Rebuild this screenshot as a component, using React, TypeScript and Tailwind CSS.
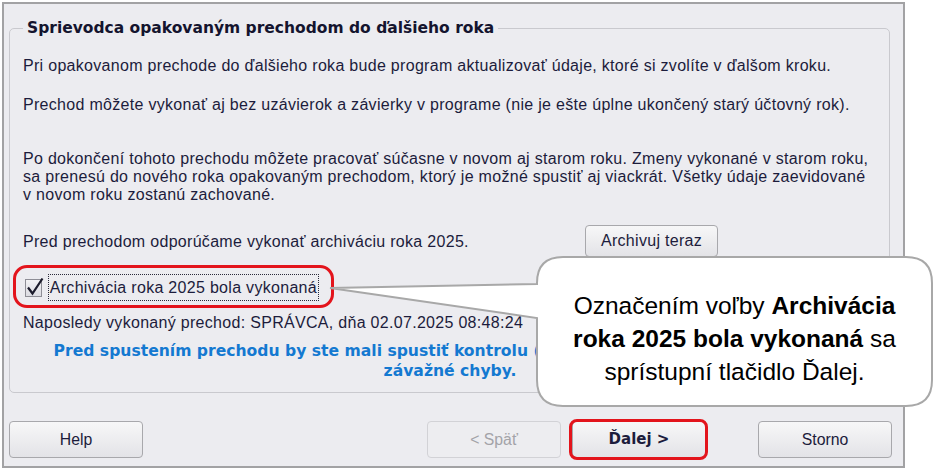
import React from "react";

const body = { fontFamily: '"Liberation Sans", Arial, sans-serif' };
const bold = { fontFamily: '"DejaVu Sans", Verdana, sans-serif' };

function WinButton({ children, disabled, strong }: { children: React.ReactNode; disabled?: boolean; strong?: boolean }) {
  return (
    <button
      className={
        "w-[134px] h-[37px] rounded-[4px] border flex items-center justify-center " +
        (disabled
          ? "border-[#d2d2d6] bg-[#ededf0] text-[#a3a3a8]"
          : "border-[#a8a8ac] bg-gradient-to-b from-[#f7f7f8] to-[#e3e3e7] text-[#1c1c3c]") +
        (strong ? " font-bold text-[15px]" : " text-[15.8px]")
      }
      style={strong ? bold : body}
    >
      {children}
    </button>
  );
}

export default function App() {
  return (
    <div className="relative w-[935px] h-[470px] bg-white overflow-hidden">
      {/* dialog window */}
      <div
        className="mt-[2px] ml-[2px] w-[903px] h-[466px] border-2 border-[#a2a2a4] bg-[#ececf0] flex flex-col text-[#1c1c3c]"
        style={body}
      >
        <fieldset className="mt-[11px] ml-[5px] w-[881px] h-[378px] border border-[#c9c9ce] rounded-[5px] pl-[13px] pr-3 text-[16px] tracking-[0.3px]">
          <legend className="px-[4px] h-[26px] pt-[3px] pb-[3px] leading-[20px] text-[15.5px] tracking-normal font-bold text-[#14142e]" style={bold}>
            Sprievodca opakovaným prechodom do ďalšieho roka
          </legend>

          <p className="mt-[16px] leading-[18px]">
            Pri opakovanom prechode do ďalšieho roka bude program aktualizovať údaje, ktoré si zvolíte v ďalšom kroku.
          </p>
          <p className="mt-[21px] leading-[18px]">
            Prechod môžete vykonať aj bez uzávierok a závierky v programe (nie je ešte úplne ukončený starý účtovný rok).
          </p>
          <p className="mt-[36px] leading-[18px]">
            Po dokončení tohoto prechodu môžete pracovať súčasne v novom aj starom roku. Zmeny vykonané v starom roku,
            <br />
            sa prenesú do nového roka opakovaným prechodom, ktorý je možné spustiť aj viackrát. Všetky údaje zaevidované
            <br />
            v novom roku zostanú zachované.
          </p>

          <div className="mt-[21px] h-[32px] flex items-center">
            <span className="w-[562px] leading-[18px] pt-[2px]">
              Pred prechodom odporúčame vykonať archiváciu roka 2025.
            </span>
            <button className="w-[133px] h-[32px] rounded-[4px] border border-[#a8a8ac] bg-gradient-to-b from-[#f7f7f8] to-[#e3e3e7]">
              Archivuj teraz
            </button>
          </div>

          <div className="relative mt-[17px] h-[27px] w-[296px] flex items-center">
            <span className="absolute -left-[10px] -top-[9px] -right-[15px] -bottom-[7px] rounded-[14px] border-[3px] border-[#e3141c]" />
            <span className="relative ml-[2px] w-[18px] h-[18px] border border-[#8e8e96] bg-gradient-to-b from-[#f2f2f4] to-[#dcdce2]">
              <svg className="absolute -left-[1px] -top-[3px]" width="20" height="20" viewBox="0 0 20 20">
                <path d="M3 10.5 L7.5 16.5 L17.5 1.5" fill="none" stroke="#1c1c2c" strokeWidth="2.2" />
              </svg>
            </span>
            <span className="ml-[6px] h-[27px] px-[1px] flex items-center border border-dotted border-[#2a2a3a] whitespace-nowrap">
              Archivácia roka 2025 bola vykonaná
            </span>
          </div>

          <p className="mt-[13px] leading-[18px]">
            Naposledy vykonaný prechod: SPRÁVCA, dňa 02.07.2025 08:48:24
          </p>

          <p className="mt-[9px] text-center font-bold text-[15.6px] tracking-normal leading-[20px] text-[#1479d1]" style={bold}>
            Pred spustením prechodu by ste mali spustiť kontrolu (Údržba dát), ktorá odhalí prípadné
            <br />
            závažné chyby.
          </p>
        </fieldset>

        {/* footer buttons */}
        <div className="mt-[28px] ml-[5px] flex items-center">
          <WinButton>Help</WinButton>
          <div className="ml-[284px]">
            <WinButton disabled>&lt; Späť</WinButton>
          </div>
          <div className="relative ml-[11px]">
            <span className="absolute -left-[3px] -top-[2px] -right-[2px] -bottom-[2px] rounded-[8px] border-[3px] border-[#e3141c]" />
            <WinButton strong>Ďalej &gt;</WinButton>
          </div>
          <div className="ml-[52px]">
            <WinButton>Storno</WinButton>
          </div>
        </div>
      </div>

      {/* callout */}
      <svg className="absolute left-0 top-0 pointer-events-none" width="935" height="470">
        <path
          d="M563 257 H906 Q932 257 932 283 V380 Q932 406 906 406 H563 Q537 406 537 380 V318 L330 288 L537 284 V283 Q537 257 563 257 Z"
          fill="#ffffff"
          stroke="#a8a8a8"
          strokeWidth="2"
        />
      </svg>
      <div
        className="absolute left-[537px] top-[257px] w-[395px] h-[149px] pt-[13px] flex items-center justify-center text-center text-[24.5px] leading-[33px] text-black"
        style={body}
      >
        <p>
          Označením voľby <b>Archivácia</b>
          <br />
          <b>roka 2025 bola vykonaná</b> sa
          <br />
          sprístupní tlačidlo Ďalej.
        </p>
      </div>
    </div>
  );
}
